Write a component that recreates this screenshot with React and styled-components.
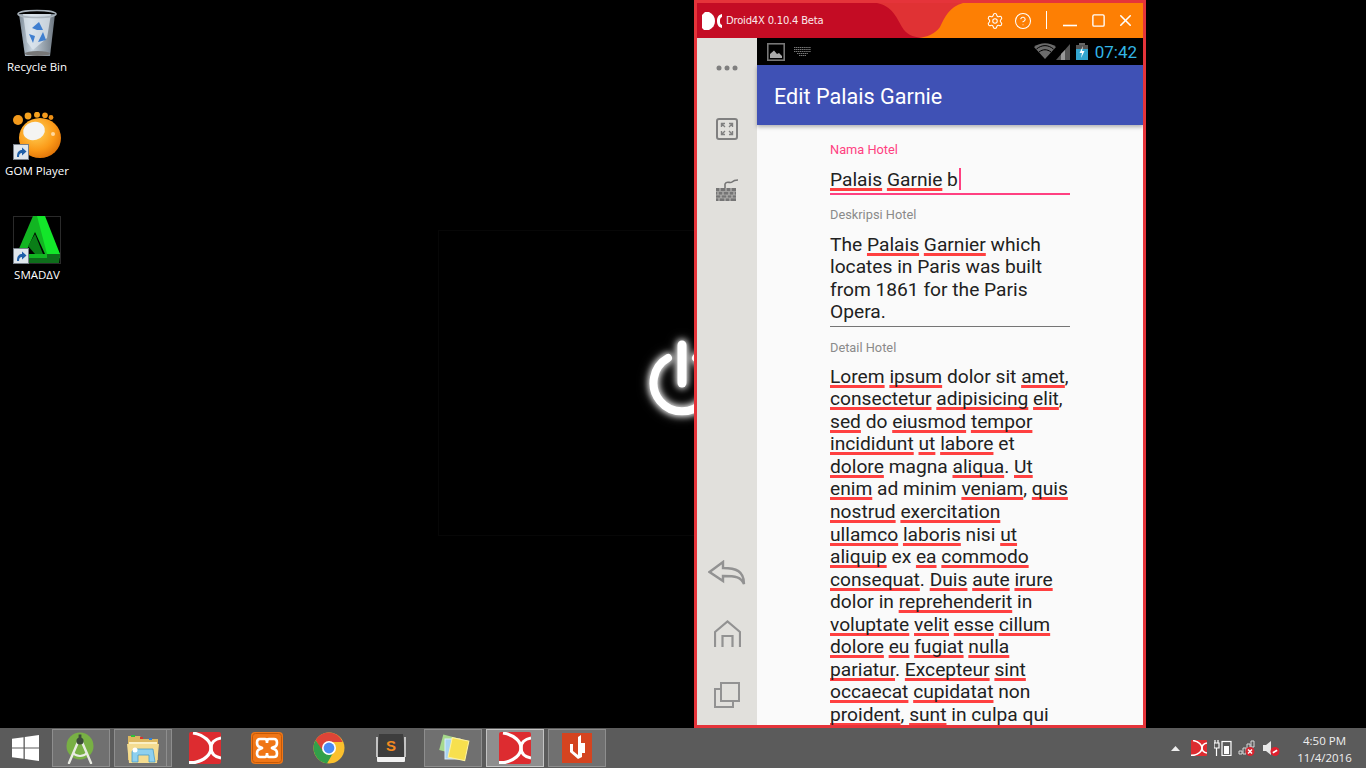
import styled, { createGlobalStyle } from "styled-components";
import { Settings, CircleHelp, X, Square } from "lucide-react";

const GlobalStyle = createGlobalStyle`
  html, body {
    margin: 0;
    padding: 0;
    background: #000;
    overflow: hidden;
  }
  * {
    box-sizing: border-box;
  }
`;

const Screen = styled.div`
  width: 1366px;
  height: 768px;
  display: flex;
  flex-direction: column;
  overflow: hidden;
  font-family: "Open Sans", "Noto Sans", sans-serif;
`;

const Desktop = styled.div`
  position: relative;
  height: 728px;
  background: #000;
  padding-top: 2px;
`;

const FaintFrame = styled.div`
  position: absolute;
  left: 438px;
  top: 230px;
  width: 300px;
  height: 306px;
  border: 1px solid #070707;
`;

const PowerIcon = styled.svg`
  position: absolute;
  left: 630px;
  top: 325px;
  filter: drop-shadow(0 0 3px #fff) drop-shadow(0 0 4px rgba(255, 255, 255, 0.6));
`;

const ShortcutList = styled.div`
  display: flex;
  flex-direction: column;
  width: 74px;
`;

const Shortcut = styled.div`
  height: 104px;
  display: flex;
  flex-direction: column;
  align-items: center;
`;

const ShortcutImage = styled.div`
  position: relative;
  width: 48px;
  height: 48px;
  margin-top: 6px;
`;

const ShortcutArrow = styled.svg`
  position: absolute;
  left: 0;
  bottom: 0;
`;

const ShortcutLabel = styled.span`
  margin-top: 3px;
  font-size: 11.5px;
  line-height: 16px;
  color: #fff;
  white-space: nowrap;
  text-shadow: 0 1px 2px #000;
`;

const EmuWindow = styled.div`
  position: absolute;
  left: 694px;
  top: 0;
  width: 452px;
  height: 728px;
  border: 3px solid #e5343a;
  display: flex;
  flex-direction: column;
  overflow: hidden;
`;

const TitleBar = styled.div`
  position: relative;
  height: 35px;
  flex: none;
  display: flex;
  align-items: center;
  background: #e03234;
  padding-left: 5px;
`;

const TitleShape = styled.svg`
  position: absolute;
  left: 0;
  top: 0;
`;

const TitleLogo = styled.svg`
  position: relative;
  flex: none;
`;

const TitleText = styled.span`
  position: relative;
  margin-left: 4px;
  font-family: "DejaVu Sans", sans-serif;
  font-size: 10px;
  letter-spacing: -0.2px;
  color: #fbe9ea;
  white-space: nowrap;
`;

const TitleActions = styled.div`
  position: relative;
  margin-left: auto;
  display: flex;
  align-items: center;
  color: #fff;
  padding-right: 5px;
`;

const TitleButton = styled.div`
  width: ${(p) => p.$w}px;
  height: 35px;
  display: flex;
  align-items: center;
  justify-content: center;
`;

const TitleDivider = styled.div`
  width: 1px;
  height: 18px;
  margin: 0 9px 1px 9px;
  background: #fff;
`;

const Body = styled.div`
  flex: 1;
  min-height: 0;
  display: flex;
`;

const SideBar = styled.div`
  width: 60px;
  flex: none;
  background: #e1e0dc;
  display: flex;
  flex-direction: column;
  justify-content: space-between;
`;

const SideGroup = styled.div`
  display: flex;
  flex-direction: column;
`;

const SideSlot = styled.div`
  height: 61px;
  display: flex;
  align-items: center;
  justify-content: center;
  padding-bottom: ${(p) => (p.$up ? 2 : 0)}px;
`;

const Phone = styled.div`
  flex: 1;
  min-width: 0;
  display: flex;
  flex-direction: column;
  background: #fafafa;
`;

const StatusBar = styled.div`
  height: 27px;
  flex: none;
  background: #000;
  display: flex;
  align-items: center;
  padding: 0 6px 0 10px;
`;

const StatusRight = styled.div`
  margin-left: auto;
  display: flex;
  align-items: center;
`;

const Clock = styled.span`
  margin-left: 7px;
  font-family: Roboto, sans-serif;
  font-size: 17px;
  color: #33b5e5;
`;

const AppBar = styled.div`
  position: relative;
  height: 60px;
  flex: none;
  background: #3f51b5;
  display: flex;
  align-items: center;
  padding: 2px 0 0 17px;
  box-shadow: 0 2px 4px rgba(0, 0, 0, 0.3);
  font-family: Roboto, sans-serif;
  font-weight: 400;
  font-size: 21.6px;
  color: #fff;
`;

const Form = styled.div`
  flex: 1;
  min-height: 0;
  overflow: hidden;
  padding: 17px 0 0 73px;
  font-family: Roboto, sans-serif;
  color: #212121;
`;

const Field = styled.div`
  width: 240px;
`;

const FieldLabel = styled.div`
  font-size: 12.8px;
  line-height: 16px;
  color: ${(p) => (p.$active ? "#ff4081" : "#8a8a8a")};
`;

const FieldValue = styled.div`
  margin-top: ${(p) => p.$top}px;
  padding-bottom: ${(p) => p.$bottom}px;
  border-bottom: ${(p) => (p.$active ? "2px solid #ff4081" : p.$plain ? "none" : "1px solid #757575")};
  margin-bottom: ${(p) => p.$after}px;
  font-size: 19.2px;
  line-height: 22.55px;
`;

const Line = styled.div`
  white-space: nowrap;
`;

const Typo = styled.span`
  text-decoration: underline;
  text-decoration-color: #ff4040;
  text-decoration-thickness: 2.5px;
  text-underline-offset: 2px;
  text-decoration-skip-ink: none;
`;

const Caret = styled.span`
  display: inline-block;
  width: 2px;
  height: 22px;
  margin-left: 1px;
  vertical-align: -4px;
  background: #ff4081;
`;

const TaskBar = styled.div`
  height: 40px;
  flex: none;
  background: #5b5b5b;
  display: flex;
  align-items: center;
  gap: 4px;
`;

const StartButton = styled.div`
  width: 48px;
  height: 38px;
  padding-left: 2px;
  display: flex;
  align-items: center;
  justify-content: center;
`;

const TaskSlot = styled.div`
  position: relative;
  width: 58px;
  height: 38px;
  display: flex;
  align-items: center;
  justify-content: center;
  border: 1px solid ${(p) => (p.$active ? "#c4c4c4" : p.$open ? "#8e8e8e" : "transparent")};
  background: ${(p) => (p.$active ? "#8e8e8e" : p.$open ? "#707070" : "transparent")};
`;

const StackLine = styled.div`
  position: absolute;
  right: 4px;
  top: -1px;
  bottom: -1px;
  width: 1px;
  background: #8e8e8e;
`;

const Tray = styled.div`
  margin-left: auto;
  display: flex;
  align-items: center;
  height: 38px;
`;

const TrayIcon = styled.div`
  width: 24px;
  display: flex;
  align-items: center;
  justify-content: center;
`;

const TrayClock = styled.div`
  width: 83px;
  padding-top: 2px;
  font-size: 11.5px;
  line-height: 17px;
  color: #efefef;
  text-align: center;
`;

const DroidMark = ({ size }) => (
  <svg width={size} height={size} viewBox="0 0 32 32">
    <rect width="32" height="32" rx="2" fill="#dd2c30" />
    <path d="M4 1 C16 3 22 10 22 16 C22 22 16 29 3 31" fill="none" stroke="#fff" strokeWidth="3.2" />
    <path d="M32 6 C26 7 22 11 22 16 C22 21 26 25 32 26" fill="none" stroke="#fff" strokeWidth="3.2" />
    <path d="M0 29 L5 29 L5 32 L0 32 Z" fill="#fff" />
  </svg>
);

const ShortcutBadge = () => (
  <ShortcutArrow width="16" height="16" viewBox="0 0 16 16">
    <rect x="0.5" y="0.5" width="15" height="15" fill="#dfe6ec" stroke="#77808a" />
    <path d="M4 13 C4 8 6 6 9 6 L9 3.5 L13.5 7.5 L9 11.5 L9 9 C7 9 6 10 6 13 Z" fill="#1f5fa8" />
  </ShortcutArrow>
);

const RecycleBin = () => (
  <svg width="48" height="48" viewBox="0 0 48 48">
    <defs>
      <linearGradient id="binBody" x1="0" x2="1">
        <stop offset="0" stopColor="#7d8a96" />
        <stop offset="0.35" stopColor="#c7d4df" />
        <stop offset="1" stopColor="#6c7680" />
      </linearGradient>
    </defs>
    <path d="M6 6 L42 6 L37 48 L12 48 Z" fill="url(#binBody)" />
    <path d="M10 6 L38 6 L34 30 L20 42 L14 34 Z" fill="#dfe8f0" opacity="0.75" />
    <path d="M19 20 L26 14 L30 22 L24 22 Z M30 24 L33 32 L25 34 Z M16 26 L22 28 L20 35 Z" fill="#3f7fd0" />
    <ellipse cx="24" cy="6" rx="19" ry="3.5" fill="none" stroke="#aab4bd" strokeWidth="1.5" />
    <ellipse cx="24.5" cy="45.5" rx="12.5" ry="2.5" fill="#777" />
  </svg>
);

const GomPlayer = () => (
  <svg width="48" height="48" viewBox="0 0 48 48">
    <defs>
      <radialGradient id="gomBall" cx="0.4" cy="0.35" r="0.75">
        <stop offset="0" stopColor="#ffd45a" />
        <stop offset="0.6" stopColor="#fb9a18" />
        <stop offset="1" stopColor="#d96a04" />
      </radialGradient>
    </defs>
    <circle cx="5" cy="8" r="5" fill="#f39a1c" />
    <circle cx="15" cy="4" r="3.4" fill="#f6a21e" />
    <circle cx="24" cy="2.8" r="3" fill="#f6a21e" />
    <circle cx="32" cy="3.2" r="2.8" fill="#f39a1c" />
    <circle cx="38" cy="5.5" r="2.4" fill="#ee9015" />
    <ellipse cx="27" cy="26" rx="21" ry="20" fill="url(#gomBall)" />
    <ellipse cx="21" cy="19" rx="11" ry="9" transform="rotate(-15 21 19)" fill="#f4f4f2" />
    <circle cx="40" cy="22" r="2" fill="#ffd9a0" />
  </svg>
);

const Smadav = () => (
  <svg width="48" height="48" viewBox="0 0 48 48">
    <rect x="0.5" y="0.5" width="47" height="47" fill="#000" stroke="#2a2a2a" />
    <path d="M20 0 L30 0 L47 39 L47 42 L2 42 Z" fill="#12b522" />
    <path d="M22 16 L32 38 L12 38 Z" fill="#000" />
    <path d="M24 0 L32 0 L47 38 L34 38 Z" fill="#13e62a" />
    <path d="M12 38 L34 38 L34 42 L2 42 L2 47 L46 47 L47 40 L47 38 Z" fill="#0e6d1b" />
    <path d="M22 18 L30 38 L22 38 L15 30 Z" fill="#0a7d17" />
  </svg>
);

const BackIcon = () => (
  <svg width="38" height="26" viewBox="0 0 38 26" fill="none" stroke="#929292" strokeWidth="2.4">
    <path d="M1.5 12 L15 2 L15 8 C28 8 36 11 36 24 C33 17 28 16 15 16 L15 21 Z" />
  </svg>
);

const HomeIcon = () => (
  <svg width="27" height="27" viewBox="0 0 27 27" fill="none" stroke="#929292" strokeWidth="2.2">
    <path d="M1 27 L1 12 L13.5 1.5 L26 12 L26 27" />
    <path d="M8.5 27 L8.5 16 L18.5 16 L18.5 27" />
  </svg>
);

const CopyIcon = () => (
  <svg width="26" height="26" viewBox="0 0 26 26" fill="none" stroke="#929292" strokeWidth="2">
    <rect x="7" y="1" width="18" height="18" />
    <path d="M7 7 L1 7 L1 25 L19 25 L19 19" />
  </svg>
);

const ExpandIcon = () => (
  <svg width="22" height="22" viewBox="0 0 22 22" fill="none" stroke="#808080">
    <rect x="1" y="1" width="20" height="20" rx="2" strokeWidth="2" />
    <path d="M5.5 5.5 L9 9 M5.5 9 L5.5 5.5 L9 5.5 M16.5 5.5 L13 9 M13 5.5 L16.5 5.5 L16.5 9 M5.5 16.5 L9 13 M5.5 13 L5.5 16.5 L9 16.5 M16.5 16.5 L13 13 M13 16.5 L16.5 16.5 L16.5 13" strokeWidth="1.4" />
  </svg>
);

const DotsIcon = () => (
  <svg width="22" height="6" viewBox="0 0 22 6" fill="#7f7f7f">
    <circle cx="3" cy="3" r="2.5" />
    <circle cx="11" cy="3" r="2.5" />
    <circle cx="19" cy="3" r="2.5" />
  </svg>
);

const KeyboardIcon = () => (
  <svg width="24" height="24" viewBox="0 0 24 24">
    <path d="M1 10 H21 V23 H1 Z" fill="#757575" />
    <path d="M5 10 V13 M11 10 V13 M16 10 V13 M3 14 V17 M8 14 V17 M14 14 V17 M19 14 V17 M6 17 V20 M12 17 V20 M17 17 V20 M4 20 V23 M10 20 V23 M15 20 V23" stroke="#e1e0dc" strokeWidth="0.7" />
    <path d="M1 13.5 H21 M1 17 H21 M1 20 H21" stroke="#b5b5b2" strokeWidth="0.7" />
    <path d="M10 10 L10 6 C12 2 15 6 17 4 C19 2 21 2 23 2" fill="none" stroke="#757575" strokeWidth="1.6" />
  </svg>
);

const WinLogo = () => (
  <svg width="27" height="26" viewBox="0 0 27 26" fill="#fff">
    <path d="M0 3.8 L11.5 2.2 L11.5 12.4 L0 12.4 Z M12.8 2 L27 0 L27 12.4 L12.8 12.4 Z M0 13.6 L11.5 13.6 L11.5 23.8 L0 22.2 Z M12.8 13.6 L27 13.6 L27 26 L12.8 24 Z" />
  </svg>
);

const AndroidStudio = () => (
  <svg width="32" height="32" viewBox="0 0 32 32">
    <circle cx="15" cy="14" r="13.5" fill="#78b044" />
    <path d="M4 31 L13 10 M26 31 L17 10" stroke="#e9ebe2" strokeWidth="2.4" strokeLinecap="round" />
    <path d="M8 21 C12 25 18 25 22 21" fill="none" stroke="#e9ebe2" strokeWidth="1.8" />
    <circle cx="15" cy="9" r="3.6" fill="#3c4a3a" />
    <rect x="13.6" y="2.5" width="2.8" height="4" fill="#3c4a3a" />
  </svg>
);

const FolderIcon = () => (
  <svg width="32" height="32" viewBox="0 0 32 32">
    <path d="M1 4 H13 L15 7 H31 V28 H1 Z" fill="#dcb860" />
    <rect x="4" y="3" width="4" height="2" fill="#2fbf3a" />
    <rect x="13" y="5" width="3" height="2" fill="#d9362b" />
    <rect x="22" y="6" width="3" height="2" fill="#2f7fd9" />
    <path d="M2 10 H30 V14 H2 Z" fill="#fbf0c4" />
    <path d="M0 12 H32 L30 31 H2 Z" fill="#f4dc90" />
    <path d="M5 30 L5 21 C5 17 8 17 11 17 L26 17 L28 30 L22 30 L22 23 L11 23 L11 30 Z" fill="#8ed0ee" stroke="#4a9cc8" strokeWidth="0.8" />
    <circle cx="8" cy="18" r="2.5" fill="#fff" />
  </svg>
);

const XamppIcon = () => (
  <svg width="32" height="32" viewBox="0 0 32 32">
    <rect width="32" height="32" rx="4" fill="#f07616" />
    <rect x="1.5" y="1.5" width="29" height="29" rx="3" fill="none" stroke="#c55a08" />
    <path d="M9 7 H14 C16 7 16 11 16 11 C16 11 16 7 18 7 H23 C27 7 27 14 23 15 C20 16 20 16 23 17 C27 18 27 25 23 25 H18 C16 25 16 21 16 21 C16 21 16 25 14 25 H9 C5 25 5 18 9 17 C12 16 12 16 9 15 C5 14 5 7 9 7 Z" fill="none" stroke="#fff" strokeWidth="2.6" />
  </svg>
);

const ChromeIcon = () => (
  <svg width="32" height="32" viewBox="0 0 32 32">
    <circle cx="16" cy="16" r="15.5" fill="#fbc02d" />
    <path d="M16 .5 A15.5 15.5 0 0 0 2.6 8.2 L9 19 L16 10 H29.6 A15.5 15.5 0 0 0 16 .5 Z" fill="#de4437" />
    <path d="M2.6 8.2 A15.5 15.5 0 0 0 14 31.4 L20 21 L10 19 Z" fill="#32a04a" />
    <circle cx="16" cy="16" r="7" fill="#fff" />
    <circle cx="16" cy="16" r="5.4" fill="#4a8af4" />
  </svg>
);

const SublimeIcon = () => (
  <svg width="30" height="30" viewBox="0 0 30 30">
    <path d="M3 1 H27 L29 24 H1 Z" fill="#3d3d3d" />
    <path d="M1 24 H29 V28 C29 29 28 29 27 29 H3 C2 29 1 29 1 28 Z" fill="#f2f2f2" />
    <path d="M1 4 V24 M29 4 V24" stroke="#eee" strokeWidth="1.4" />
    <text x="15" y="18" textAnchor="middle" fontFamily="Liberation Sans, sans-serif" fontWeight="700" fontSize="15" fill="#f28a20">S</text>
  </svg>
);

const StickyIcon = () => (
  <svg width="34" height="32" viewBox="0 0 34 32">
    <rect x="5" y="4" width="15" height="16" transform="rotate(15 12 12)" fill="#a6d98c" />
    <rect x="9" y="7" width="15" height="20" fill="#a7d3f2" stroke="#dbeefb" />
    <rect x="14" y="7" width="17" height="20" transform="rotate(12 22 17)" fill="#f7e04e" stroke="#fff3a0" />
  </svg>
);

const RedBookIcon = () => (
  <svg width="30" height="30" viewBox="0 0 30 30">
    <rect width="30" height="30" fill="#d44420" />
    <path d="M8 11 L11 11 L11 18 L16 22 L16 4 L19 2 L19 10 L23 10 L23 20 L20 20 L20 24 L16 26 L8 19 Z" fill="#fff" />
  </svg>
);

const BatteryTray = () => (
  <svg width="18" height="16" viewBox="0 0 18 16" fill="none" stroke="#fff" strokeWidth="1.2">
    <path d="M1 3 V0 M4 3 V0 M0 3 H5 V8 H0 Z M2.5 8 V16" />
    <rect x="8" y="1.5" width="9" height="14" />
    <rect x="10" y="6" width="5" height="8" fill="#fff" stroke="none" />
  </svg>
);

const NetworkTray = () => (
  <svg width="18" height="16" viewBox="0 0 18 16">
    <path d="M1 11 H4 V14 H1 Z M5 8 H8 V14 H5 Z M9 4 H12 V9 H9 Z M13 1 H16 V7 H13 Z" fill="none" stroke="#d8d8d8" />
    <circle cx="12" cy="11.5" r="4.5" fill="#d9232e" />
    <path d="M10 9.5 L14 13.5 M14 9.5 L10 13.5" stroke="#fff" strokeWidth="1.4" />
  </svg>
);

const SoundTray = () => (
  <svg width="18" height="16" viewBox="0 0 18 16">
    <path d="M1 5 H4 L9 1 V15 L4 11 H1 Z" fill="#e8e8e8" />
    <circle cx="13" cy="11.5" r="4.5" fill="#e0202e" />
    <path d="M10.5 11.5 H15.5" stroke="#fff" strokeWidth="1.6" transform="rotate(-30 13 11.5)" />
  </svg>
);

const renderLine = (text) =>
  text.split(/(\[[^\]]+\])/).map((part, i) =>
    part.startsWith("[") ? <Typo key={i}>{part.slice(1, -1)}</Typo> : part
  );

const descLines = ["The [Palais] [Garnier] which", "locates in Paris was built", "from 1861 for the Paris", "Opera."];

const detailLines = [
  "[Lorem] [ipsum] dolor sit [amet],",
  "[consectetur] [adipisicing] [elit],",
  "[sed] do [eiusmod] [tempor]",
  "[incididunt] [ut] [labore] et",
  "[dolore] magna [aliqua]. [Ut]",
  "[enim] ad minim [veniam], [quis]",
  "[nostrud] [exercitation]",
  "[ullamco] [laboris] nisi [ut]",
  "[aliquip] ex [ea] [commodo]",
  "[consequat]. [Duis] [aute] [irure]",
  "dolor in [reprehenderit] in",
  "[voluptate] [velit] [esse] [cillum]",
  "[dolore] [eu] [fugiat] [nulla]",
  "[pariatur]. [Excepteur] [sint]",
  "[occaecat] [cupidatat] non",
  "[proident], [sunt] in culpa qui",
];

export default function App() {
  return (
    <Screen>
      <GlobalStyle />
      <Desktop>
        <FaintFrame />
        <PowerIcon width="80" height="110" viewBox="0 0 80 110" fill="none" stroke="#fff" strokeLinecap="round">
          <path d="M38 33 A28.5 28.5 0 1 0 66 33" strokeWidth="8" />
          <path d="M52 20 V58" strokeWidth="9" />
        </PowerIcon>

        <ShortcutList>
          <Shortcut>
            <ShortcutImage>
              <RecycleBin />
            </ShortcutImage>
            <ShortcutLabel>Recycle Bin</ShortcutLabel>
          </Shortcut>
          <Shortcut>
            <ShortcutImage>
              <GomPlayer />
              <ShortcutBadge />
            </ShortcutImage>
            <ShortcutLabel>GOM Player</ShortcutLabel>
          </Shortcut>
          <Shortcut>
            <ShortcutImage>
              <Smadav />
              <ShortcutBadge />
            </ShortcutImage>
            <ShortcutLabel>SMADΔV</ShortcutLabel>
          </Shortcut>
        </ShortcutList>

        <EmuWindow>
          <TitleBar>
            <TitleShape width="446" height="35" viewBox="0 0 446 35">
              <path d="M0 0 H180 C195 3 200 15 205 24 C209 31 215 34 225 35 H0 Z" fill="#c40c24" />
              <path d="M266 0 C252 4 248 14 243 24 C238 31 230 34 222 35 H446 V0 Z" fill="#fd7f04" />
            </TitleShape>
            <TitleLogo width="20" height="20" viewBox="0 0 20 20">
              <path d="M0 4 L3 1 H7 C11 3 13 6 13 10 C13 14 11 17 7 19 H2 L0 17 Z" fill="#fff" />
              <path d="M20 3 C16 4 15 7 15 10 C15 13 16 16 20 17 L20 14 C18 13 18 12 18 10 C18 8 18 7 20 6 Z" fill="#fff" />
            </TitleLogo>
            <TitleText>Droid4X 0.10.4 Beta</TitleText>
            <TitleActions>
              <TitleButton $w={28}>
                <Settings size={18} strokeWidth={1.4} />
              </TitleButton>
              <TitleButton $w={28}>
                <CircleHelp size={18} strokeWidth={1.4} />
              </TitleButton>
              <TitleDivider />
              <TitleButton $w={28}>
                <svg width="14" height="14" viewBox="0 0 14 14">
                  <path d="M0 11.5 H14" stroke="#fff" strokeWidth="1.6" />
                </svg>
              </TitleButton>
              <TitleButton $w={28}>
                <Square size={15} strokeWidth={2.2} />
              </TitleButton>
              <TitleButton $w={26}>
                <X size={19} strokeWidth={2} />
              </TitleButton>
            </TitleActions>
          </TitleBar>

          <Body>
            <SideBar>
              <SideGroup>
                <SideSlot $up>
                  <DotsIcon />
                </SideSlot>
                <SideSlot $up>
                  <ExpandIcon />
                </SideSlot>
                <SideSlot $up>
                  <KeyboardIcon />
                </SideSlot>
              </SideGroup>
              <SideGroup>
                <SideSlot>
                  <BackIcon />
                </SideSlot>
                <SideSlot>
                  <HomeIcon />
                </SideSlot>
                <SideSlot>
                  <CopyIcon />
                </SideSlot>
              </SideGroup>
            </SideBar>

            <Phone>
              <StatusBar>
                <svg width="18" height="18" viewBox="0 0 18 18">
                  <rect x="0.8" y="0.8" width="16.4" height="16.4" fill="none" stroke="#777" strokeWidth="1.6" />
                  <path d="M3 15 V11 L7 7.5 L10 11 L12 10 L15 13 V15 Z" fill="#aaa" />
                </svg>
                <svg width="17" height="9" viewBox="0 0 17 9" style={{ marginLeft: 9 }}>
                  <path d="M0 0.5 H17 M0 2.5 H17 M0 4.5 H17 M3 6.5 H14 M5 8.5 H12" stroke="#777" strokeDasharray="1.4 .5" />
                </svg>
                <StatusRight>
                  <svg width="22" height="17" viewBox="0 0 22 17">
                    <path d="M11 16 L0 4 C6 -1 16 -1 22 4 Z" fill="#6b6b6b" />
                    <path d="M2.5 6 C8 1.5 14 1.5 19.5 6 M5 9 C9 6 13 6 17 9" fill="none" stroke="#000" strokeWidth="1" />
                  </svg>
                  <svg width="14" height="17" viewBox="0 0 14 17">
                    <path d="M0 17 L14 1 V17 Z" fill="#555" />
                    <path d="M5 17 V11 L9 7 V17 Z" fill="#999" />
                  </svg>
                  <svg width="12" height="17" viewBox="0 0 12 17" style={{ marginLeft: 6 }}>
                    <rect x="3" y="0" width="6" height="2" fill="#666" />
                    <rect y="2" width="12" height="4" fill="#555" />
                    <rect y="6" width="12" height="11" fill="#33a5cf" />
                    <path d="M7 3 L3.5 10 H6 L5 15 L8.5 8 H6 Z" fill="#fff" />
                  </svg>
                  <Clock>07:42</Clock>
                </StatusRight>
              </StatusBar>
              <AppBar>Edit Palais Garnie</AppBar>
              <Form>
                <Field>
                  <FieldLabel $active>Nama Hotel</FieldLabel>
                  <FieldValue $top={10} $bottom={1} $after={12} $active>
                    <Line>
                      <Typo>Palais</Typo> <Typo>Garnie</Typo> b
                      <Caret />
                    </Line>
                  </FieldValue>
                  <FieldLabel>Deskripsi Hotel</FieldLabel>
                  <FieldValue $top={11} $bottom={2} $after={13}>
                    {descLines.map((line) => (
                      <Line key={line}>{renderLine(line)}</Line>
                    ))}
                  </FieldValue>
                  <FieldLabel>Detail Hotel</FieldLabel>
                  <FieldValue $top={10} $bottom={0} $after={0} $plain>
                    {detailLines.map((line) => (
                      <Line key={line}>{renderLine(line)}</Line>
                    ))}
                  </FieldValue>
                </Field>
              </Form>
            </Phone>
          </Body>
        </EmuWindow>
      </Desktop>

      <TaskBar>
        <StartButton>
          <WinLogo />
        </StartButton>
        <TaskSlot $open>
          <AndroidStudio />
        </TaskSlot>
        <TaskSlot $open>
          <FolderIcon />
          <StackLine />
        </TaskSlot>
        <TaskSlot>
          <DroidMark size={32} />
        </TaskSlot>
        <TaskSlot>
          <XamppIcon />
        </TaskSlot>
        <TaskSlot>
          <ChromeIcon />
        </TaskSlot>
        <TaskSlot>
          <SublimeIcon />
        </TaskSlot>
        <TaskSlot $open>
          <StickyIcon />
        </TaskSlot>
        <TaskSlot $active>
          <DroidMark size={32} />
        </TaskSlot>
        <TaskSlot $open>
          <RedBookIcon />
        </TaskSlot>
        <Tray>
          <TrayIcon>
            <svg width="9" height="5" viewBox="0 0 9 5" fill="#eee">
              <path d="M0 5 L4.5 0 L9 5 Z" />
            </svg>
          </TrayIcon>
          <TrayIcon>
            <DroidMark size={16} />
          </TrayIcon>
          <TrayIcon>
            <BatteryTray />
          </TrayIcon>
          <TrayIcon>
            <NetworkTray />
          </TrayIcon>
          <TrayIcon>
            <SoundTray />
          </TrayIcon>
          <TrayClock>
            4:50 PM
            <br />
            11/4/2016
          </TrayClock>
        </Tray>
      </TaskBar>
    </Screen>
  );
}
